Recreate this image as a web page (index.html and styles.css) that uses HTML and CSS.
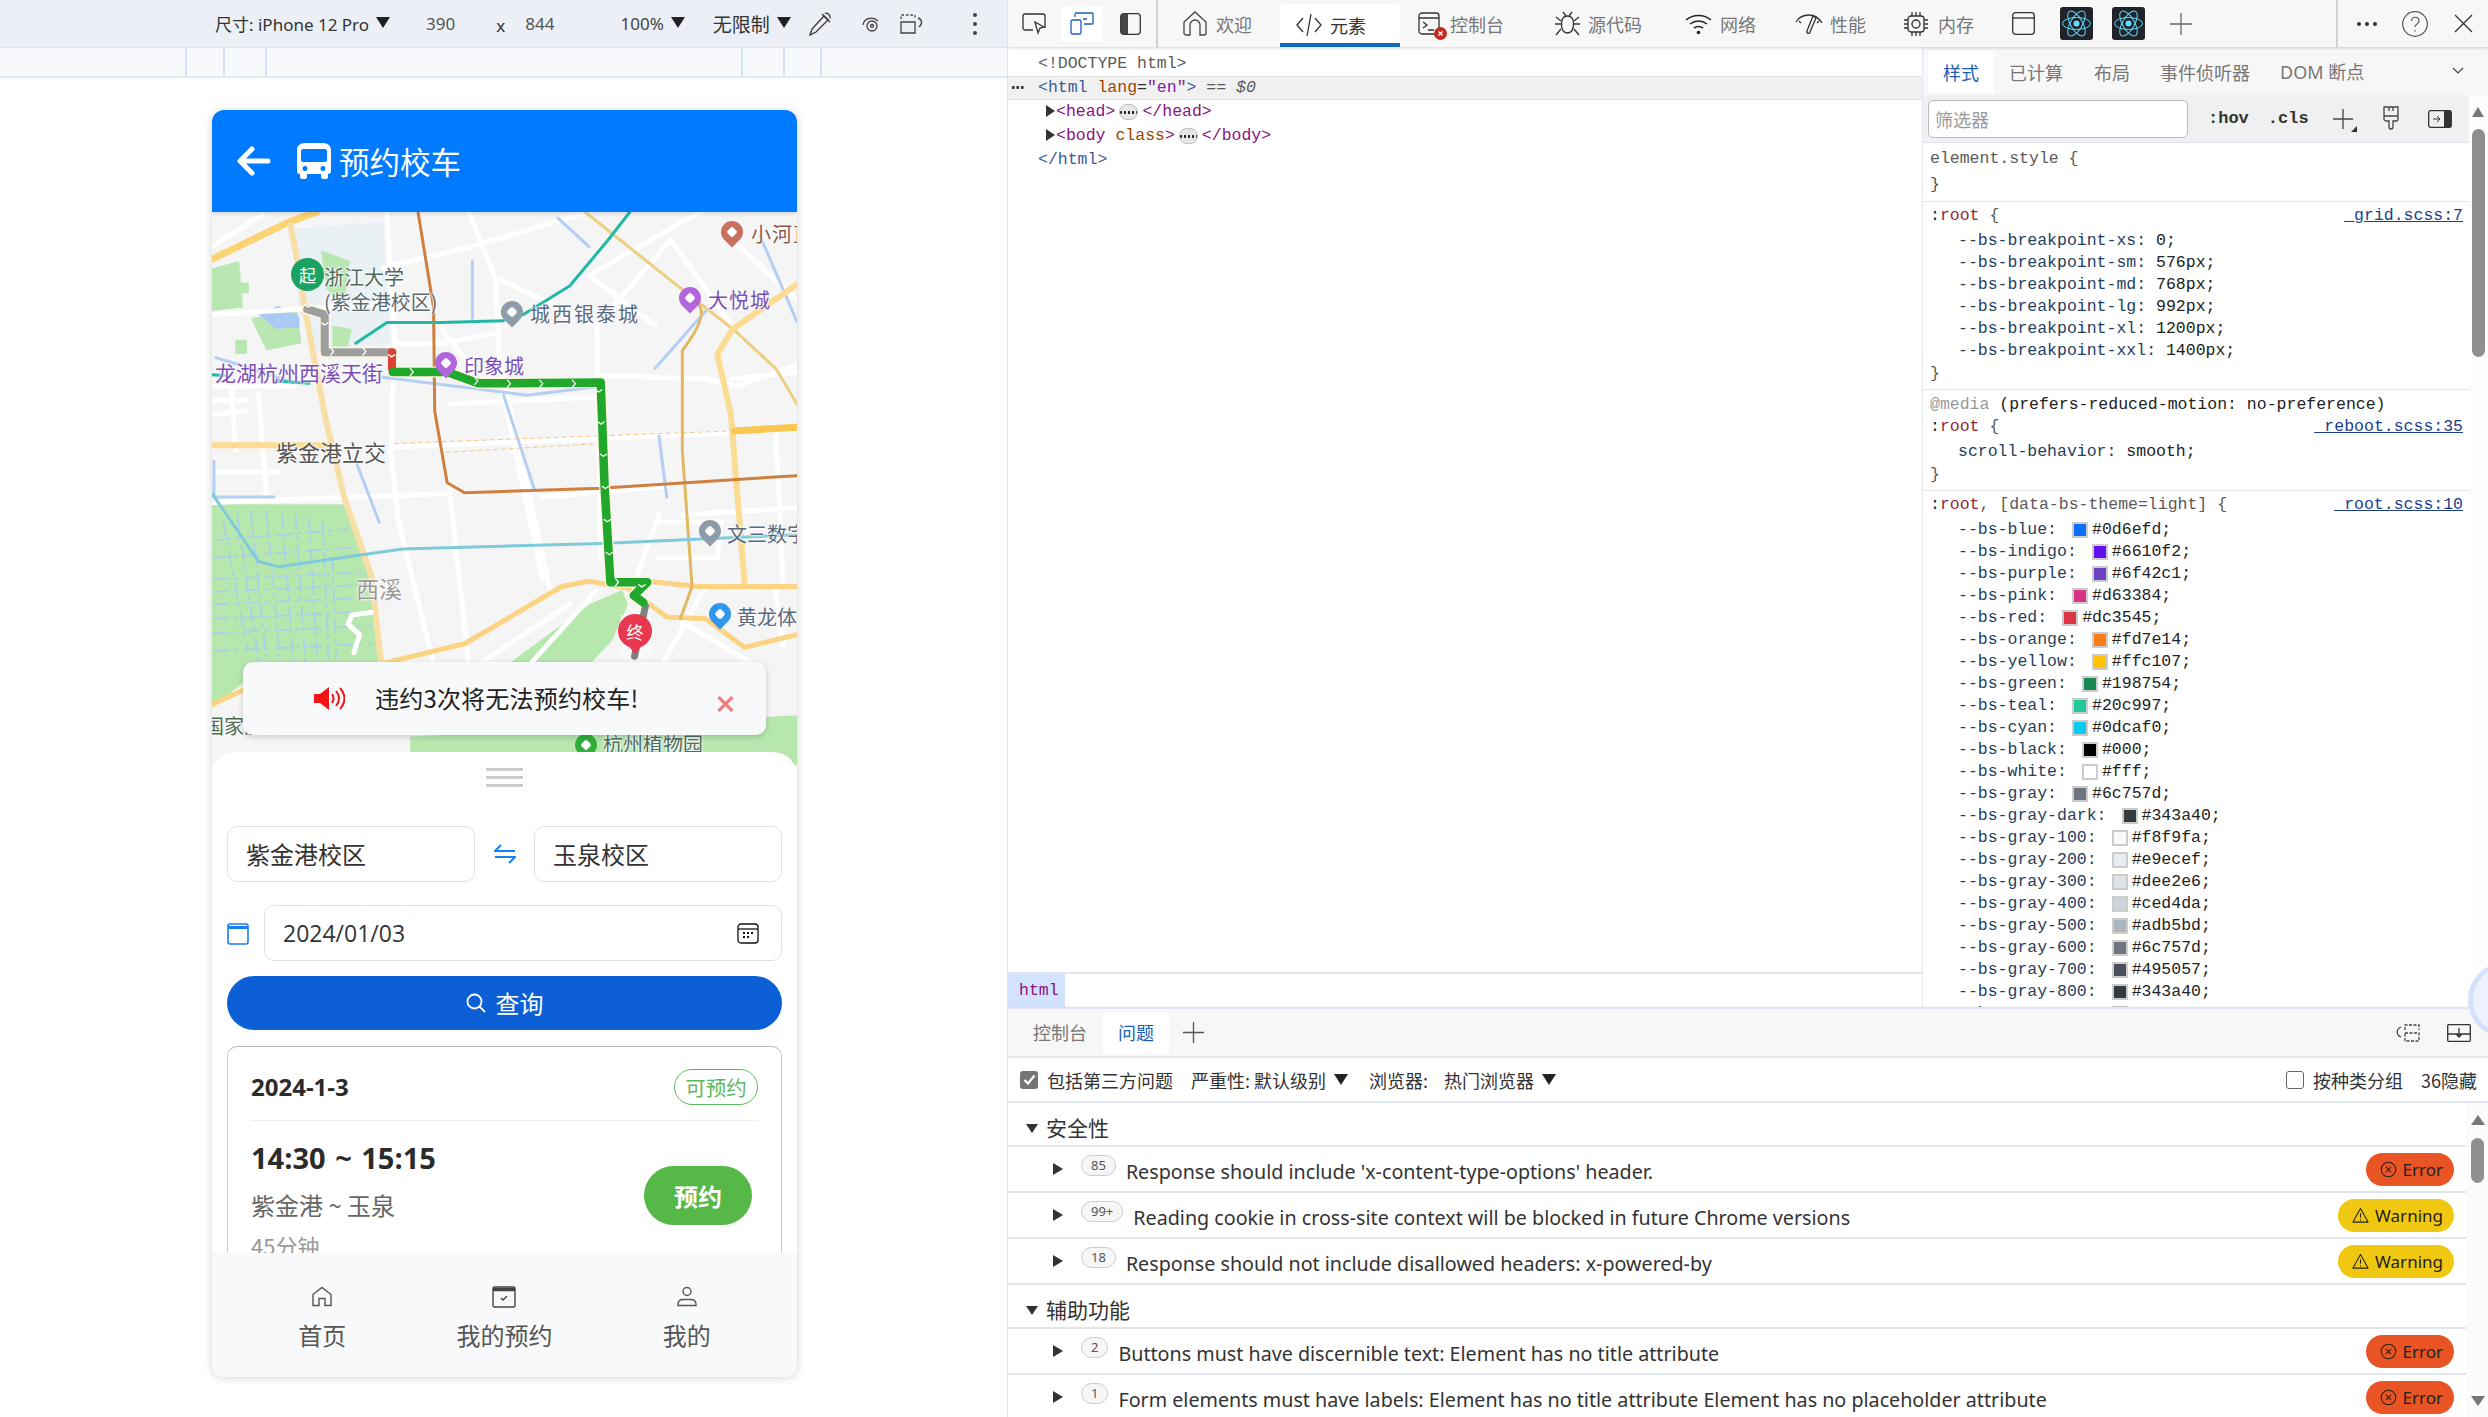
FILE: index.html
```html
<!DOCTYPE html>
<html lang="zh">
<head>
<meta charset="utf-8">
<title>预约校车</title>
<link rel="stylesheet" href="styles.css">
</head>
<body>
<svg class="defs" width="0" height="0">
  <symbol id="i-err" viewBox="0 0 18 18"><circle cx="9" cy="9" r="7.7" fill="none" stroke="#222" stroke-width="1.1"/><path d="M6.3 6.3l5.4 5.4M11.7 6.3l-5.4 5.4" stroke="#222" stroke-width="1.1" fill="none"/></symbol>
  <symbol id="i-warn" viewBox="0 0 18 18"><path d="M9 1.5l8 14.5H1z" fill="none" stroke="#222" stroke-width="1.1" stroke-linejoin="round"/><path d="M9 6.5v5M9 13v1.2" stroke="#222" stroke-width="1.1"/></symbol>
  <symbol id="i-react" viewBox="0 0 33 33"><rect width="33" height="33" rx="3" fill="#20232a"/><g fill="none" stroke="#61dafb" stroke-width="1"><ellipse cx="16.5" cy="16.5" rx="14" ry="6"/><ellipse cx="16.5" cy="16.5" rx="14" ry="6" transform="rotate(60 16.5 16.5)"/><ellipse cx="16.5" cy="16.5" rx="14" ry="6" transform="rotate(120 16.5 16.5)"/></g><circle cx="16.5" cy="16.5" r="3" fill="#61dafb"/></symbol>
</svg>

<div class="screen">
  <section class="emulator">
    <div class="device-bar">
      <span class="dv dv-size">尺寸: iPhone 12 Pro</span><span class="caret"></span>
      <span class="dv dv-w">390</span><span class="dv dv-x">x</span><span class="dv dv-h">844</span>
      <span class="dv dv-zoom">100%</span><span class="caret"></span>
      <span class="dv dv-net">无限制</span><span class="caret"></span>
      <svg class="dv-ic dv-ic1" width="26" height="26" viewBox="0 0 26 26" fill="none" stroke="#333" stroke-width="1.3"><path d="M3 24l2-6L17 5l4 4L9 21z"/><path d="M15 3l8 8M18 2.500c2-1.500 6 2 5 5"/></svg>
      <svg class="dv-ic dv-ic2" width="20" height="20" viewBox="0 0 20 20" fill="none" stroke="#444" stroke-width="1.3"><path d="M2 11c1-7 10-9 15-4"/><circle cx="11" cy="12" r="5"/><circle cx="11" cy="12" r="1.500"/></svg>
      <svg class="dv-ic dv-ic3" width="26" height="22" viewBox="0 0 26 22" fill="none" stroke="#444" stroke-width="1.3"><path d="M2 9h14v11H2z"/><path d="M2 6V2h14v4" stroke-dasharray="2.500 2"/><path d="M19 5c4 1 5 6 1 9"/></svg>
      <span class="dots-v"><i></i><i></i><i></i></span>
    </div>
    <div class="ruler"><i class="t1"></i><i class="t2"></i><i class="t3"></i><i class="t4"></i><i class="t5"></i><i class="t6"></i></div>

    <div class="phone">
      <header class="app-head">
        <svg class="back" width="34" height="30" viewBox="0 0 34 30" fill="none" stroke="#fff" stroke-width="5" stroke-linecap="round" stroke-linejoin="round"><path d="M15 3L3 15l12 12M4 15h27"/></svg>
        <svg class="bus" width="36" height="36" viewBox="0 0 36 36"><path fill="#fff" fill-rule="evenodd" d="M9 0h18c5 0 8 3 8 7v21c0 2-1 3-3 3v3c0 1-1 2-2 2h-3c-1 0-2-1-2-2v-3H11v3c0 1-1 2-2 2H6c-1 0-2-1-2-2v-3c-2 0-3-1-3-3V7c0-4 3-7 8-7zM7 6c-1 0-2 1-2 2v9c0 1 1 2 2 2h22c1 0 2-1 2-2V8c0-1-1-2-2-2zM9 23a2.500 2.500 0 100 5 2.500 2.500 0 000-5zm18 0a2.500 2.500 0 100 5 2.500 2.500 0 000-5z"/></svg>
        <h1 class="app-title">预约校车</h1>
      </header>

      <div class="map">
        <svg class="map-bg" viewBox="30 33 1505 1546" preserveAspectRatio="none">
          <rect x="30" y="33" width="1505" height="1546" fill="#f5f5f5"/>
          <path fill="#eaf1f5" d="M245 80L470 60 490 400 300 420 250 300z"/>
          <path fill="#b9e7b2" d="M30 190L100 170 110 300 30 310zM130 330L250 310 260 400 170 420zM310 140L385 170 370 290 325 250zM100 230h25v30h-25zM90 390h30v40H90zM340 350l50 10-10 50-40 0z"/>
          <path fill="#a9caf5" d="M150 320l50-25 55 30v30l-60 5z"/>
          <path fill="#b6e8ae" d="M30 850H370L440 1050 465 1300 250 1320 120 1340 30 1420zM800 1290L1000 1130 1085 1090 1100 1130 1060 1230 1000 1300H800zM540 1500L1535 1440V1579H540z"/>
          <path fill="#fff" d="M1080 1160l80 0v120h-80z" opacity=".4"/>
          <path class="r canal" d="M60 900L120 1250M95 880L150 1290M130 870L170 1290M170 870L205 1290M210 880L240 1290M245 880L270 1290M280 890L300 1280M315 900L330 1280M340 1000L350 1280M40 950L380 920M35 1000L400 970M35 1060L420 1040M35 1095L430 1075M35 1130L440 1110M35 1170L440 1150M35 1210L440 1190M35 1260L440 1240"/>
          <path class="r w5" d="M30 130L160 40M30 320L480 290M470 190L730 120 1000 33M480 33L500 400 490 700 510 900 600 1295M690 33L760 220 770 450 900 1090M30 845L640 820M640 800L690 1290M780 545L880 1060M1020 350L1030 1000M1000 210L1240 60 1290 33M1210 110L1360 340M1350 90L1535 280M1030 490L1300 500 1380 520 1535 460M500 690L1370 650M1180 900L1340 900 1330 1000 1180 1000M1480 640L1500 1080M1110 1090L1180 880M620 360L700 470M30 600L120 590M1190 1295L1300 1080M850 1295L1020 1090M1240 1180L1420 1295M80 520L90 700M150 540L170 830M35 760L200 760M30 520H240M720 1295L950 1130M1480 1090L1500 1250M500 400H620L770 370M770 220L1020 350 1210 110M30 560H120M880 830L1200 800M1365 500L1535 480M1240 880L1535 860M1000 210L1170 350M640 570L1020 550"/>
          <path class="r" stroke="#b4cff3" stroke-width="3" d="M470 495L840 545 1030 520M920 50L1000 130M700 170L700 330M780 545L860 810M1170 470L1300 310M1440 100L1535 340M40 440L100 460 240 510M1180 660L1200 830M35 730L35 830H190M400 730L460 900"/>
          <path class="r" stroke="#fbd372" stroke-width="7" d="M30 165L230 60 300 33"/>
          <path class="r" stroke="#f8dfa5" stroke-width="6" d="M232 70L250 170 270 310 320 600 370 830 440 1050 465 1295"/>
          <path class="r" stroke="#eccf83" stroke-width="3" d="M990 33L1240 250 1370 360 1480 470 1535 570"/>
          <path class="r" stroke="#fbdc92" stroke-width="6" d="M30 685H330M1535 235L1370 360 1330 430 1365 600 1400 1070"/>
          <path class="r" stroke="#f7c74e" stroke-width="7" d="M1375 645L1535 635"/>
          <path class="r" stroke="#f0c98c" stroke-width="1" stroke-dasharray="4 4" d="M500 680L1370 645M630 705L1030 680"/>
          <path class="r" stroke="#fbd382" stroke-width="5" d="M1150 1065L1280 1080 1535 1080M470 1295L680 1240 930 1080 1000 1065 1100 1085 1200 1165 1300 1170 1400 1250 1535 1215M30 1410L110 1370"/>
          <path class="r" stroke="#e0b860" stroke-width="3" d="M1280 290Q1310 320 1240 420V700L1265 1080 1235 1170"/>
          <path class="r" stroke="#cf7f3e" stroke-width="3" d="M560 33L600 300 603 590 635 790 680 818 1030 805 1535 770"/>
          <path class="r" stroke="#22b8a8" stroke-width="3" d="M1105 33L1050 110 950 240 830 320M400 400L480 342 620 342 780 337M30 488L60 490M190 505L280 512"/>
          <path class="r" stroke="#7fcbdc" stroke-width="3" d="M30 820L150 1010 200 1025 520 975 1030 960 1535 935"/>
          <path class="r w5" d="M390 1160L440 1152M390 1160L380 1185 410 1215 395 1265"/>
          <path class="r" stroke="#fdf6dc" stroke-width="11" d="M275 305L320 320V425H495V480H635L715 512 1030 510 1040 800 1055 1068H1150L1115 1105 1140 1125"/>
          <path class="r" stroke="#9e9e9e" stroke-width="8" d="M275 305L320 320V425H495"/>
          <path class="r" stroke="#808080" stroke-width="7" d="M1145 1135L1117 1275"/>
          <path class="r" stroke="#dc4334" stroke-width="8" d="M493 425V470"/>
          <path class="r" stroke="#1fa82b" stroke-width="8.500" d="M495 480H635L715 512 1030 510 1040 800 1055 1068H1150L1115 1105 1140 1125"/>
          <path class="r" stroke="#fff" stroke-width="1.300" d="M335 413l8 10-8 10M418 413l8 10-8 10M540 470l8 10-8 10M625 472l8 10-8 10M706 495l8 10-8 10M790 503l8 10-8 10M873 503l8 10-8 10M957 503l8 10-8 10M1068 1058l8 10-8 10M270 293l8 6 8-6M312 343l8 6 8-6M484 432l8 6 8-6M1017 530l8 6 8-6M1023 620l8 6 8-6M1029 710l8 6 8-6M1034 800l8 6 8-6M1039 893l8 6 8-6M1044 985l8 6 8-6M1128 1075l8 6 8-6"/>
        </svg>

        <span class="lbl l-zju1">浙江大学</span>
        <span class="lbl l-zju2">(紫金港校区)</span>
        <span class="lbl l-yintai">城西银泰城</span>
        <span class="lbl l-joy">大悦城</span>
        <span class="lbl l-river">小河直街</span>
        <span class="lbl l-mix">印象城</span>
        <span class="lbl l-longhu">龙湖杭州西溪天街</span>
        <span class="lbl l-zjg">紫金港立交</span>
        <span class="lbl l-xixi">西溪</span>
        <span class="lbl l-wensan">文三数字</span>
        <span class="lbl l-huanglong">黄龙体育</span>
        <span class="lbl l-wet">国家湿地</span>
        <span class="lbl l-plant">杭州植物园</span>

        <span class="poi poi-river"></span>
        <span class="poi poi-joy"></span>
        <span class="poi poi-yintai"></span>
        <span class="poi poi-mix"></span>
        <span class="poi poi-wensan"></span>
        <span class="poi poi-huanglong"></span>
        <span class="poi poi-plant"></span>
        <span class="pin pin-start">起</span>
        <span class="pin pin-end">终</span>

        <div class="alert">
          <svg class="speaker" width="31" height="23" viewBox="0 0 31 23"><path fill="#f01414" d="M0 7h6l9-7v23l-9-7H0z"/><path fill="none" stroke="#f01414" stroke-width="2" d="M18 7c2 3 2 6 0 9M22 4c4 5 4 10 0 15M26 1c6 7 6 14 0 21"/></svg>
          <span class="alert-text">违约3次将无法预约校车!</span>
          <svg class="alert-x" width="17" height="16" viewBox="0 0 17 16"><path stroke="#f47c7c" stroke-width="3.200" d="M1.500 1l14 14M15.500 1l-14 14"/></svg>
        </div>
      </div>

      <div class="sheet">
        <div class="handle"><i></i><i></i><i></i></div>
        <div class="campus-row">
          <div class="field">紫金港校区</div>
          <svg class="swap" width="22" height="20" viewBox="0 0 22 20" fill="none" stroke="#1a7ff0" stroke-width="2"><path d="M21 7H1l6-6M1 13h20l-6 6"/></svg>
          <div class="field">玉泉校区</div>
        </div>
        <div class="date-row">
          <svg width="22" height="23" viewBox="0 0 22 23" fill="none" stroke="#1a7ff0" stroke-width="1.600"><rect x="1" y="2" width="20" height="20" rx="2"/><path d="M1 5.500h20" stroke-width="3"/></svg>
          <div class="field date-field"><span>2024/01/03</span>
            <svg width="22" height="21" viewBox="0 0 22 21" fill="none" stroke="#111" stroke-width="1.300"><rect x="1" y="1" width="20" height="19" rx="3"/><path d="M1 6h20"/><path stroke-width="2" stroke-dasharray="2 2" d="M6 10h10M6 14h6"/></svg>
          </div>
        </div>
        <button class="query">
          <svg width="20" height="20" viewBox="0 0 20 20" fill="none" stroke="#fff" stroke-width="1.800"><circle cx="8.500" cy="8.500" r="7"/><path d="M13.500 13.500l5.500 5.500"/></svg>
          <span>查询</span>
        </button>
        <article class="card">
          <div class="card-head"><span class="card-date">2024-1-3</span><span class="avail">可预约</span></div>
          <div class="card-body">
            <div class="trip">
              <div class="trip-time">14:30 ~ 15:15</div>
              <div class="trip-route">紫金港 ~ 玉泉</div>
              <div class="trip-dur">45分钟</div>
            </div>
            <button class="book">预约</button>
          </div>
        </article>
      </div>

      <nav class="tabbar">
        <a class="tab-item">
          <svg width="22" height="22" viewBox="0 0 22 22" fill="none" stroke="#555" stroke-width="1.400"><path d="M2 20V9l9-7 9 7v11h-6v-7H8v7z"/></svg>
          <span>首页</span>
        </a>
        <a class="tab-item">
          <svg width="24" height="23" viewBox="0 0 24 23" fill="none" stroke="#444" stroke-width="1.400"><rect x="1" y="2" width="22" height="20" rx="1.500"/><path d="M1 4.500h22" stroke-width="3.500"/><path d="M9 13l2 2 4-4"/></svg>
          <span>我的预约</span>
        </a>
        <a class="tab-item">
          <svg width="20" height="22" viewBox="0 0 20 22" fill="none" stroke="#555" stroke-width="1.400"><circle cx="10" cy="6" r="4"/><path d="M1 19c0-3 2-5 5-5h8c3 0 5 2 5 5v1H1z"/></svg>
          <span>我的</span>
        </a>
      </nav>
    </div>
  </section>

  <section class="devtools">
    <div class="dt-bar">
      <svg class="ti-inspect" width="24" height="22" viewBox="0 0 24 22" fill="none" stroke="#333" stroke-width="1.300"><path d="M11 17H3a2 2 0 01-2-2V3a2 2 0 012-2h18a2 2 0 012 2v12"/><path d="M13 9l9 5-4 1-2 5z"/></svg>
      <span class="device-on"><svg width="24" height="23" viewBox="0 0 24 23" fill="none" stroke="#1a5fb4" stroke-width="1.300"><rect x="1" y="8" width="10" height="14" rx="1.500"/><path d="M5 1h17a1 1 0 011 1v9a1 1 0 01-1 1H14M5 5V2M13 7h4"/></svg></span>
      <svg class="ti-side" width="21" height="22" viewBox="0 0 21 22"><rect x=".7" y=".7" width="19.600" height="20.600" rx="3" fill="none" stroke="#333" stroke-width="1.300"/><path d="M1 4a3 3 0 013-3h4v20H4a3 3 0 01-3-3z" fill="#444"/></svg>
      <i class="dt-div d1"></i>
      <span class="dtab t-welcome"><svg width="24" height="25" viewBox="0 0 24 25" fill="none" stroke="#444" stroke-width="1.300"><path d="M7 24H3a2 2 0 01-2-2V11L12 1l11 10v11a2 2 0 01-2 2h-4V14a5 5 0 00-10 0z"/></svg>欢迎</span>
      <span class="dtab dtab-on t-elements"><svg width="26" height="24" viewBox="0 0 26 24" fill="none" stroke="#333" stroke-width="1.300"><path d="M7 5l-6 7 6 7M19 5l6 7-6 7M15 1l-4 22"/></svg>元素</span>
      <span class="dtab t-console"><span class="cons-ic"><svg width="22" height="23" viewBox="0 0 22 23" fill="none" stroke="#333" stroke-width="1.300"><rect x="1" y="1" width="20" height="21" rx="3"/><path d="M1 6h20M5 10l4 3-4 3M10 18h6"/></svg><i class="cons-badge"><svg width="13" height="13" viewBox="0 0 13 13" stroke="#fff" stroke-width="1.300"><path d="M4.500 4.500l4 4M8.500 4.500l-4 4"/></svg></i></span>控制台</span>
      <span class="dtab t-sources"><svg width="25" height="25" viewBox="0 0 25 25" fill="none" stroke="#333" stroke-width="1.300"><path d="M12.500 5c4 0 6 3 6 8s-2 9-6 9-6-4-6-9 2-8 6-8z"/><path d="M8 1l3 4M17 1l-3 4M1 6l5 4M24 6l-5 4M0 13h6M25 13h-6M1 24l5-6M24 24l-5-6"/></svg>源代码</span>
      <span class="dtab t-network"><svg width="27" height="22" viewBox="0 0 27 22" fill="none" stroke="#222" stroke-width="1.600"><path d="M1 7c7-6 18-6 25 0M5 11c5-4 12-4 17 0M9 15c3-2 6-2 9 0"/><circle cx="13.500" cy="19.500" r="1.800" fill="#222" stroke="none"/></svg>网络</span>
      <span class="dtab t-perf"><svg width="28" height="22" viewBox="0 0 28 22" fill="none" stroke="#333" stroke-width="1.300"><path d="M1 9c3-5 7-7 13-7 5 0 10 3 13 8M4 8l2 2M24 8l-2 2"/><path d="M18 3l-6 15c-1 3 3 3 3 1l6-14z"/></svg>性能</span>
      <span class="dtab t-memory"><svg width="24" height="24" viewBox="0 0 24 24" fill="none" stroke="#333" stroke-width="1.300"><rect x="4" y="4" width="16" height="16" rx="3"/><circle cx="12" cy="12" r="4"/><path d="M8 0v4M12 0v4M16 0v4M8 20v4M12 20v4M16 20v4M0 8h4M0 12h4M0 16h4M20 8h4M20 12h4M20 16h4"/></svg>内存</span>
      <svg class="ti-window" width="23" height="23" viewBox="0 0 23 23" fill="none" stroke="#333" stroke-width="1.300"><rect x=".7" y=".7" width="21.600" height="21.600" rx="3"/><path d="M1 6h21"/></svg>
      <svg class="ti-react1" width="33" height="33"><use href="#i-react"/></svg>
      <svg class="ti-react2" width="33" height="33"><use href="#i-react"/></svg>
      <svg class="ti-plus" width="22" height="22" viewBox="0 0 22 22" stroke="#666" stroke-width="1.300"><path d="M0 11h22M11 0v22"/></svg>
      <i class="dt-div d2"></i>
      <span class="h-dots"><i></i><i></i><i></i></span>
      <svg class="ti-help" width="26" height="26" viewBox="0 0 26 26" fill="none" stroke="#555" stroke-width="1.200"><circle cx="13" cy="13" r="12.300"/><path d="M9.500 10c0-5 7.500-5 7.500 0 0 3-4 3-4 6M13 19v1.500"/></svg>
      <svg class="ti-close" width="19" height="19" viewBox="0 0 19 19" stroke="#333" stroke-width="1.300"><path d="M1 1l17 17M18 1L1 18"/></svg>
    </div>

    <div class="dt-main">
      <div class="dom-panel">
        <div class="dom-tree mono">
          <div class="dom-row c-gray">&lt;!DOCTYPE html&gt;</div>
          <div class="dom-row dom-sel"><span class="sel-dots"></span><span class="c-blue">&lt;html</span> <span class="c-attr">lang</span>=<span class="c-val">"en"</span><span class="c-blue">&gt;</span> <span class="c-gray">== <em>$0</em></span></div>
          <div class="dom-row dom-in"><span class="tri-r"></span><span class="c-tag">&lt;head&gt;</span><span class="ell"></span><span class="c-tag">&lt;/head&gt;</span></div>
          <div class="dom-row dom-in"><span class="tri-r"></span><span class="c-tag">&lt;body</span> <span class="c-attr">class</span><span class="c-tag">&gt;</span><span class="ell"></span><span class="c-tag">&lt;/body&gt;</span></div>
          <div class="dom-row c-blue">&lt;/html&gt;</div>
        </div>
        <div class="crumbs"><span class="crumb mono">html</span></div>
      </div>

      <aside class="styles">
        <div class="st-tabs">
          <span class="st-tab st-on">样式</span><span class="st-tab">已计算</span><span class="st-tab">布局</span><span class="st-tab">事件侦听器</span><span class="st-tab">DOM 断点</span>
          <svg class="st-more" width="12" height="8" viewBox="0 0 12 8" fill="none" stroke="#444" stroke-width="1.200"><path d="M1 1l5 5 5-5"/></svg>
        </div>
        <div class="st-filter">
          <div class="filter-in">筛选器</div>
          <span class="hov mono">:hov</span><span class="cls mono">.cls</span>
          <svg class="f-plus" width="24" height="24" viewBox="0 0 24 24"><path d="M0 11h20M10 1v20" stroke="#444" stroke-width="1.300"/><path d="M24 18v6h-6z" fill="#333"/></svg>
          <svg class="f-brush" width="16" height="25" viewBox="0 0 16 25" fill="none" stroke="#444" stroke-width="1.300"><path d="M1 1h14v12a2 2 0 01-2 2h-3v6a2 2 0 01-4 0v-6H3a2 2 0 01-2-2zM1 10h14M6 1v4M10 1v4"/></svg>
          <svg class="f-side" width="24" height="18" viewBox="0 0 24 18"><rect x=".7" y=".7" width="22.600" height="16.600" rx="2" fill="none" stroke="#333" stroke-width="1.300"/><path d="M16 1h6a1 1 0 011 1v14a1 1 0 01-1 1h-6z" fill="#333"/><path d="M5 9h7M9 6l3 3-3 3" fill="none" stroke="#333"/></svg>
        </div>
        <div class="st-rules mono">
          <div class="rule r-a">
            <div class="ln ln-sel c-gray">element.style {</div>
            <div class="ln ln-c c-gray">}</div>
          </div>
          <div class="rule">
            <div class="ln ln-sel"><span><span class="c-colon">:</span><span class="c-root">root</span> <span class="c-gray">{</span></span><a class="src">_grid.scss:7</a></div>
            <div class="ln p">--bs-breakpoint-xs: <b>0;</b></div>
            <div class="ln p">--bs-breakpoint-sm: <b>576px;</b></div>
            <div class="ln p">--bs-breakpoint-md: <b>768px;</b></div>
            <div class="ln p">--bs-breakpoint-lg: <b>992px;</b></div>
            <div class="ln p">--bs-breakpoint-xl: <b>1200px;</b></div>
            <div class="ln p">--bs-breakpoint-xxl: <b>1400px;</b></div>
            <div class="ln ln-e c-gray">}</div>
          </div>
          <div class="rule r-m">
            <div class="ln"><span class="c-lgray">@media</span>&nbsp;<b>(prefers-reduced-motion: no-preference)</b></div>
            <div class="ln ln-sel"><span><span class="c-colon">:</span><span class="c-root">root</span> <span class="c-gray">{</span></span><a class="src">_reboot.scss:35</a></div>
            <div class="ln p">scroll-behavior: <b>smooth;</b></div>
            <div class="ln ln-e c-gray">}</div>
          </div>
          <div class="rule">
            <div class="ln ln-sel"><span><span class="c-colon">:</span><span class="c-root">root</span><span class="c-gray">, [data-bs-theme=light] {</span></span><a class="src">_root.scss:10</a></div>
            <div class="ln p">--bs-blue:<i class="sw s-blue"></i><b>#0d6efd;</b></div>
            <div class="ln p">--bs-indigo:<i class="sw s-indigo"></i><b>#6610f2;</b></div>
            <div class="ln p">--bs-purple:<i class="sw s-purple"></i><b>#6f42c1;</b></div>
            <div class="ln p">--bs-pink:<i class="sw s-pink"></i><b>#d63384;</b></div>
            <div class="ln p">--bs-red:<i class="sw s-red"></i><b>#dc3545;</b></div>
            <div class="ln p">--bs-orange:<i class="sw s-orange"></i><b>#fd7e14;</b></div>
            <div class="ln p">--bs-yellow:<i class="sw s-yellow"></i><b>#ffc107;</b></div>
            <div class="ln p">--bs-green:<i class="sw s-green"></i><b>#198754;</b></div>
            <div class="ln p">--bs-teal:<i class="sw s-teal"></i><b>#20c997;</b></div>
            <div class="ln p">--bs-cyan:<i class="sw s-cyan"></i><b>#0dcaf0;</b></div>
            <div class="ln p">--bs-black:<i class="sw s-black"></i><b>#000;</b></div>
            <div class="ln p">--bs-white:<i class="sw s-white"></i><b>#fff;</b></div>
            <div class="ln p">--bs-gray:<i class="sw s-g600"></i><b>#6c757d;</b></div>
            <div class="ln p">--bs-gray-dark:<i class="sw s-g800"></i><b>#343a40;</b></div>
            <div class="ln p">--bs-gray-100:<i class="sw s-g100"></i><b>#f8f9fa;</b></div>
            <div class="ln p">--bs-gray-200:<i class="sw s-g200"></i><b>#e9ecef;</b></div>
            <div class="ln p">--bs-gray-300:<i class="sw s-g300"></i><b>#dee2e6;</b></div>
            <div class="ln p">--bs-gray-400:<i class="sw s-g400"></i><b>#ced4da;</b></div>
            <div class="ln p">--bs-gray-500:<i class="sw s-g500"></i><b>#adb5bd;</b></div>
            <div class="ln p">--bs-gray-600:<i class="sw s-g600"></i><b>#6c757d;</b></div>
            <div class="ln p">--bs-gray-700:<i class="sw s-g700"></i><b>#495057;</b></div>
            <div class="ln p">--bs-gray-800:<i class="sw s-g800"></i><b>#343a40;</b></div>
            <div class="ln p">--bs-gray-900:<i class="sw s-g900"></i><b>#212529;</b></div>
          </div>
        </div>
        <div class="vbar vbar-st"><i class="up"></i><i class="thumb"></i></div>
      </aside>
    </div>

    <div class="drawer-tabs">
      <span class="dr-tab">控制台</span><span class="dr-tab dr-on">问题</span>
      <svg class="dr-plus" width="21" height="21" viewBox="0 0 21 21" stroke="#555" stroke-width="1.300"><path d="M0 10.500h21M10.500 0v21"/></svg>
      <svg class="dr-ic1" width="24" height="18" viewBox="0 0 24 18" fill="none" stroke="#444" stroke-width="1.300"><path d="M9 9h14v8H9zM9 6V1h14v5" stroke-dasharray="3 1.500"/><path d="M5 3C0 5 0 11 5 13"/></svg>
      <svg class="dr-ic2" width="24" height="18" viewBox="0 0 24 18" fill="none" stroke="#333" stroke-width="1.300"><rect x=".7" y=".7" width="22.600" height="16.600" rx="1"/><path d="M1 10h22M12 4v9M9 10l3 3 3-3"/></svg>
    </div>
    <div class="issues-bar">
      <label class="chk-on"><svg width="13" height="11" viewBox="0 0 13 11" fill="none" stroke="#fff" stroke-width="2.200"><path d="M1.500 6l3.500 3.500 6.500-8"/></svg></label>
      <span class="ib ib1">包括第三方问题</span>
      <span class="ib ib2">严重性: 默认级别</span><span class="caret"></span>
      <span class="ib ib3">浏览器:</span><span class="ib ib4">热门浏览器</span><span class="caret"></span>
      <label class="chk-off"></label>
      <span class="ib ib5">按种类分组</span>
      <span class="ib ib6">36隐藏</span>
    </div>
    <div class="issues">
      <div class="issue-list">
        <div class="group"><span class="tri-d"></span>安全性</div>
        <div class="issue"><span class="tri-r2"></span><span class="count">85</span><span class="msg">Response should include 'x-content-type-options' header.</span><span class="sev sev-e"><svg width="17" height="17"><use href="#i-err"/></svg>Error</span></div>
        <div class="issue"><span class="tri-r2"></span><span class="count">99+</span><span class="msg">Reading cookie in cross-site context will be blocked in future Chrome versions</span><span class="sev sev-w"><svg width="17" height="17"><use href="#i-warn"/></svg>Warning</span></div>
        <div class="issue"><span class="tri-r2"></span><span class="count">18</span><span class="msg">Response should not include disallowed headers: x-powered-by</span><span class="sev sev-w"><svg width="17" height="17"><use href="#i-warn"/></svg>Warning</span></div>
        <div class="group"><span class="tri-d"></span>辅助功能</div>
        <div class="issue"><span class="tri-r2"></span><span class="count">2</span><span class="msg">Buttons must have discernible text: Element has no title attribute</span><span class="sev sev-e"><svg width="17" height="17"><use href="#i-err"/></svg>Error</span></div>
        <div class="issue"><span class="tri-r2"></span><span class="count">1</span><span class="msg">Form elements must have labels: Element has no title attribute Element has no placeholder attribute</span><span class="sev sev-e"><svg width="17" height="17"><use href="#i-err"/></svg>Error</span></div>
      </div>
      <div class="vbar vbar-is"><i class="up"></i><i class="thumb"></i><i class="down"></i></div>
    </div>
    <i class="float-ball"></i>
  </section>
</div>
</body>
</html>
```

FILE: styles.css
```css
* { box-sizing: border-box; }
html, body { margin: 0; padding: 0; background: #fff; }
body { font-family: "Noto Sans", "Noto Sans CJK SC", sans-serif; color: #222; }
.defs { position: absolute; }
i { font-style: normal; }
.mono { font-family: "Liberation Mono", "DejaVu Sans Mono", monospace; font-size: 16.5px; }
.screen { width: 2488px; height: 1417px; display: flex; overflow: hidden; }

/* ---------- emulator ---------- */
.emulator { width: 1008px; flex: none; border-right: 1px solid #dbe4f2; display: flex; flex-direction: column; }
.device-bar { height: 48px; background: #eceff5; border-bottom: 1px solid #d9e3f5; display: flex; align-items: center; font-size: 17px; color: #333; padding-left: 215px; }
.dv { white-space: nowrap; font-family: "Noto Sans", "Noto Sans CJK SC", sans-serif; }
.dv-w { margin-left: 36px; color: #555; }
.dv-x { margin-left: 41px; margin-top: 4px; }
.dv-h { margin-left: 20px; color: #555; }
.dv-zoom { margin-left: 66px; color: #444; }
.dv-net { margin-left: 28px; font-size: 19px; }
.caret { width: 0; height: 0; border-left: 7px solid transparent; border-right: 7px solid transparent; border-top: 11px solid #222; margin-left: 7px; margin-top: -3px; flex: none; }
.dv-ic1 { margin-left: 16px; }
.dv-ic2 { margin-left: 28px; }
.dv-ic3 { margin-left: 18px; }
.dots-v { display: flex; flex-direction: column; gap: 5px; margin-left: 48px; }
.dots-v i { width: 4px; height: 4px; border-radius: 50%; background: #444; }
.ruler { height: 30px; background: #f8f9fc; border-bottom: 2px solid #dfe8f6; position: relative; }
.ruler i { position: absolute; top: 0; bottom: 0; width: 2px; background: #d6e2fa; }
.t1 { left: 185px; } .t2 { left: 223px; } .t3 { left: 265px; } .t4 { left: 741px; } .t5 { left: 783px; } .t6 { left: 820px; }

.phone { width: 585px; height: 1267px; margin: 32px 0 0 212px; border-radius: 12px; background: #fff; box-shadow: 0 1px 8px rgba(0,0,0,.18); display: flex; flex-direction: column; overflow: hidden; }
.app-head { height: 102px; flex: none; background: #007bff; display: flex; align-items: center; padding: 0 0 0 25px; position: relative; z-index: 2; box-shadow: 0 2px 4px rgba(0,0,0,.12); }
.back { flex: none; }
.bus { margin-left: 25px; flex: none; }
.app-title { margin: 0 0 0 7px; font: 400 30.5px/1 "Noto Sans CJK SC", sans-serif; color: #fff; }

.map { height: 553px; flex: none; position: relative; overflow: hidden; background: #f5f5f5; font-family: "Noto Sans CJK SC", sans-serif; }
.map-bg { position: absolute; inset: 0; width: 100%; height: 100%; display: block; }
.r { fill: none; stroke-linecap: round; stroke-linejoin: round; vector-effect: non-scaling-stroke; }
.w5 { stroke: #fff; stroke-width: 5; }
.canal { stroke: #a9c8f6; stroke-width: 2; stroke-dasharray: 14 6 3 8; opacity: .75; }

.lbl { position: absolute; white-space: nowrap; line-height: 1; font-size: 20px; color: #5b5b66; text-shadow: 0 0 2px #fff, 0 0 2px #fff, 0 0 3px #fff; }
.l-zju1 { left: 112px; top: 55px; color: #4f6a60; }
.l-zju2 { left: 112px; top: 80px; color: #5a6a70; }
.l-yintai { left: 318px; top: 92px; letter-spacing: 2px; color: #5a6a80; }
.l-joy { left: 496px; top: 78px; color: #7a4fb5; letter-spacing: 1px; }
.l-river { left: 539px; top: 12px; color: #8a5a50; letter-spacing: 1px; }
.l-mix { left: 252px; top: 144px; color: #7a4fb5; }
.l-longhu { left: 3px; top: 150px; color: #7a4fb5; font-size: 21px; }
.l-zjg { left: 64px; top: 228px; color: #555; font-size: 22px; }
.l-xixi { left: 144px; top: 365px; color: #999; font-size: 23px; }
.l-wensan { left: 515px; top: 312px; color: #5a6a80; }
.l-huanglong { left: 525px; top: 395px; color: #5a6a80; }
.l-wet { left: -8px; top: 504px; color: #4f6a50; }
.l-plant { left: 391px; top: 522px; color: #4f6a60; }

.poi { position: absolute; width: 22px; height: 22px; border-radius: 50% 50% 0 50%; transform: rotate(45deg); }
.poi::after { content: ""; position: absolute; left: 7px; top: 7px; width: 8px; height: 8px; background: #fff; border-radius: 2px; }
.poi-river { left: 509px; top: 9px; background: #c9705f; }
.poi-joy { left: 467px; top: 75px; background: #b266dd; }
.poi-yintai { left: 289px; top: 89px; background: #8d9cab; }
.poi-mix { left: 223px; top: 140px; background: #b266dd; }
.poi-wensan { left: 487px; top: 308px; background: #8d9cab; }
.poi-huanglong { left: 497px; top: 391px; background: #2f97ee; }
.poi-plant { left: 363px; top: 522px; background: #2fae3a; }

.pin { position: absolute; border-radius: 50%; color: #fff; display: flex; align-items: center; justify-content: center; font-size: 17px; line-height: 1; }
.pin::after { content: ""; position: absolute; left: 50%; width: 0; height: 0; transform: translateX(-50%); }
.pin-start { left: 79px; top: 46px; width: 33px; height: 33px; background: #1aa264; }
.pin-start::after { top: 27px; border-left: 11px solid transparent; border-right: 11px solid transparent; border-top: 16px solid #3f90d6; z-index: -1; }
.pin-end { left: 406px; top: 402px; width: 34px; height: 34px; background: #e8384f; }
.pin-end::after { top: 30px; border-left: 8px solid transparent; border-right: 8px solid transparent; border-top: 10px solid #e8384f; }

.alert { position: absolute; left: 31px; top: 450px; width: 523px; height: 73px; background: #f8f9fa; border-radius: 10px; box-shadow: 0 2px 6px rgba(0,0,0,.18); display: flex; align-items: center; padding-left: 71px; }
.alert-text { margin-left: 30px; font-size: 24px; line-height: 1; color: #222; white-space: nowrap; margin-top: -1px; letter-spacing: .2px; }
.alert-x { margin-left: 79px; margin-top: 10px; }

.sheet { flex: 1; min-height: 0; margin-top: -13px; position: relative; z-index: 1; background: #fff; border-radius: 24px 24px 0 0; overflow: hidden; padding: 16px 15px 0; font-family: "Noto Sans CJK SC", sans-serif; }
.handle { width: 37px; height: 19px; margin: 0 auto; display: flex; flex-direction: column; justify-content: space-between; }
.handle i { height: 3px; background: #ccc; }
.campus-row { margin-top: 39px; display: grid; grid-template-columns: 248px 1fr 248px; align-items: center; justify-items: center; }
.field { height: 56px; width: 100%; border: 1px solid #dee2e6; border-radius: 10px; font-size: 24px; line-height: 54px; padding-left: 18px; color: #333; }
.date-row { margin-top: 23px; display: flex; align-items: center; gap: 15px; }
.date-field { flex: 1; display: flex; align-items: center; justify-content: space-between; padding: 0 22px 0 18px; font-family: "Open Sans", "Noto Sans", sans-serif; font-size: 23px; }
.query { margin-top: 15px; width: 100%; height: 54px; border: 0; border-radius: 27px; background: #0d5fd6; color: #fff; font: 400 24px/1 "Noto Sans CJK SC", sans-serif; display: flex; align-items: center; justify-content: center; gap: 10px; }
.card { margin-top: 16px; border: 1px solid #ccc; border-top-color: #bbb; border-radius: 10px; padding: 22px 23px 0; height: 260px; }
.card-head { display: flex; justify-content: space-between; align-items: center; padding-bottom: 15px; border-bottom: 1px solid #eee; }
.card-date { font: 700 24px/1 "Open Sans", "Noto Sans", sans-serif; color: #2b2b2b; }
.avail { height: 36px; width: 84px; border: 1px solid #5cb85c; border-radius: 18px; color: #5cb85c; font-size: 20.5px; line-height: 34px; text-align: center; }
.card-body { display: flex; align-items: center; justify-content: space-between; margin-top: 17px; padding-right: 6px; }
.trip-time { font: 700 29px/40px "Open Sans", "Noto Sans", sans-serif; color: #2b2b2b; word-spacing: 2px; }
.trip-route { margin-top: 13px; font-size: 24px; line-height: 28px; color: #666; }
.trip-dur { margin-top: 14px; font-size: 22px; line-height: 24px; color: #999; }
.book { width: 108px; height: 59px; margin-top: -4px; border: 0; border-radius: 30px; background: #56b947; color: #fff; font: 700 24px/1 "Noto Sans CJK SC", sans-serif; }
.tabbar { height: 124px; flex: none; background: #f8f9fa; display: grid; grid-template-columns: repeat(3, 1fr); padding: 0 19px; position: relative; z-index: 2; font-family: "Noto Sans CJK SC", sans-serif; }
.tab-item { display: flex; flex-direction: column; align-items: center; padding-top: 32px; color: #555; font-size: 24px; line-height: 1; }
.tab-item svg { height: 23px; }
.tab-item span { margin-top: 15px; }

/* ---------- devtools ---------- */
.devtools { flex: 1; min-width: 0; display: flex; flex-direction: column; position: relative; overflow: hidden; font-family: "Noto Sans CJK SC", sans-serif; }
.dt-bar { height: 47px; flex: none; background: #f7f7f7; box-shadow: 0 1px 3px rgba(0,0,0,.18); display: flex; align-items: center; position: relative; z-index: 3; padding-left: 14px; }
.ti-inspect, .ti-side, .ti-window, .ti-react1, .ti-react2, .ti-plus, .ti-help, .ti-close { flex: none; }
.device-on { width: 42px; height: 36px; margin-left: 15px; background: #fff; border-radius: 4px; display: flex; align-items: center; justify-content: center; }
.ti-side { margin-left: 17px; }
.dt-div { width: 2px; height: 47px; background: #d2d2d2; flex: none; }
.d1 { margin-left: 15px; }
.d2 { margin-left: 144px; }
.dtab { display: flex; align-items: center; gap: 9px; font-size: 18px; color: #777; height: 47px; white-space: nowrap; flex: none; }
.t-welcome { margin-left: 25px; }
.t-elements { margin-left: 28px; }
.t-console { margin-left: 18px; }
.t-sources { margin-left: 51px; gap: 8px; }
.t-network { margin-left: 43px; gap: 8px; }
.t-perf { margin-left: 39px; gap: 7px; }
.t-memory { margin-left: 38px; gap: 10px; }
.dtab-on { width: 120px; height: 43px; margin-top: 3px; background: #fff; border-radius: 4px 4px 0 0; border-bottom: 4px solid #0f6cbd; color: #333; padding: 0 16px; gap: 8px; padding-top: 4px; }
.cons-ic { position: relative; display: block; width: 22px; height: 23px; margin-right: 1px; }
.cons-badge { position: absolute; right: -7px; bottom: -5px; width: 13px; height: 13px; border-radius: 50%; background: #c42b1c; }
.cons-badge svg { display: block; }
.ti-window { margin-left: 38px; }
.ti-react1 { margin-left: 25px; }
.ti-react2 { margin-left: 19px; }
.ti-plus { margin-left: 25px; }
.h-dots { display: flex; gap: 4px; margin-left: 19px; }
.h-dots i { width: 4px; height: 4px; border-radius: 50%; background: #333; }
.ti-help { margin-left: 25px; }
.ti-close { margin-left: 26px; }

.dt-main { height: 960px; flex: none; display: flex; overflow: hidden; }
.dom-panel { width: 915px; flex: none; display: flex; flex-direction: column; border-right: 1px solid #e3e8f0; }
.dom-tree { flex: 1; padding-top: 5px; color: #333; }
.dom-row { height: 24px; line-height: 24px; padding-left: 30px; white-space: pre; position: relative; }
.dom-sel { background: #f1f1f1; border-top: 1px solid #e2e2e2; border-bottom: 1px solid #e2e2e2; line-height: 22px; }
.dom-in { padding-left: 48px; }
.sel-dots { position: absolute; left: 3px; top: 8px; width: 14px; height: 5px; background: radial-gradient(circle, #333 1.3px, transparent 1.6px) 0 0 / 4.5px 5px repeat-x; }
.c-gray { color: #5a5a5a; }
.c-tag { color: #881280; }
.c-blue { color: #3a5a9a; }
.c-attr { color: #994500; }
.c-val { color: #7a1fa2; }
em { font-style: italic; }
.tri-r { position: absolute; left: 38px; top: 5px; width: 0; height: 0; border-top: 6.5px solid transparent; border-bottom: 6.5px solid transparent; border-left: 9px solid #333; }
.ell { display: inline-block; height: 16px; width: 19px; margin: 0 4px; border-radius: 8px; border: 1px solid #bbb; vertical-align: middle; background: radial-gradient(circle, #222 1.1px, transparent 1.4px) 3px 5px / 4px 5px repeat-x, #e6e6e6; background-clip: padding-box; }
.crumbs { height: 35px; flex: none; border-top: 2px solid #dfe6f0; }
.crumb { display: block; width: 57px; height: 33px; background: #d3e3fd; color: #881280; line-height: 33px; padding-left: 11px; }

.styles { flex: 1; min-width: 0; position: relative; overflow: hidden; }
.st-tabs { height: 48px; background: #f7f7f7; display: flex; align-items: center; padding-left: 5px; font-size: 18px; color: #777; position: relative; }
.st-tab { height: 42px; line-height: 42px; padding: 0 15px; white-space: nowrap; border-radius: 4px 4px 0 0; margin-top: 2px; }
.st-tab + .st-tab { padding: 0 15px 0 0; margin-left: 0; }
.st-on { background: #fff; color: #1a5fb4; width: 66px; margin-right: 15px; padding: 0 15px; }
.st-tab:nth-child(3) { padding-right: 30px; margin-left: 31px; }
.st-tab:nth-child(2) { padding-right: 0; margin-left: 0; }
.st-tab:nth-child(4) { padding-right: 30px; }
.st-tab:nth-child(5) { font-family: "Noto Sans", "Noto Sans CJK SC", sans-serif; }
.st-more { position: absolute; right: 24px; top: 20px; }
.st-filter { height: 48px; background: #f0f0f0; border-bottom: 1px solid #dfe6f0; width: 546px; display: flex; align-items: center; padding-left: 5px; }
.filter-in { width: 260px; height: 38px; background: #fff; border: 1px solid #bbb; border-radius: 5px; font-size: 18px; line-height: 36px; color: #999; padding-left: 6px; }
.hov, .cls { font-weight: 700; font-size: 17px; color: #333; }
.hov { margin-left: 20px; }
.cls { margin-left: 19px; }
.f-plus { margin-left: 24px; margin-top: 2px; }
.f-brush { margin-left: 26px; }
.f-side { margin-left: 29px; }
.st-rules { width: 546px; padding-left: 4px; color: #1f4060; }
.rule { border-bottom: 1px solid #dfe6f0; padding: 3px 0 4px; margin-left: -4px; padding-left: 5px; }
.r-a { padding: 5px 0 5px 5px; }
.r-m { padding-top: 4px; }
.ln { height: 22px; line-height: 22px; padding-left: 2px; white-space: pre; display: flex; align-items: center; justify-content: flex-start; }
.ln b { font-weight: 400; color: #222; }
.ln-sel { justify-content: space-between; padding-right: 6px; margin-bottom: 3px; }
.ln-c { margin-top: 4px; color: #555; }
.ln-e { margin-top: 1px; }
.p { padding-left: 30px; }
.c-colon { color: #222; }
.c-root { color: #8a2a3c; }
.c-lgray { color: #999; }
.src { color: #1a3e8a; text-decoration: underline; }
.sw { width: 16px; height: 16px; margin: 0 4px 0 15px; border: 2px solid #ccc; flex: none; }
.s-blue { background: #0d6efd; } .s-indigo { background: #6610f2; } .s-purple { background: #6f42c1; } .s-pink { background: #d63384; }
.s-red { background: #dc3545; } .s-orange { background: #fd7e14; } .s-yellow { background: #ffc107; } .s-green { background: #198754; }
.s-teal { background: #20c997; } .s-cyan { background: #0dcaf0; } .s-black { background: #000; } .s-white { background: #fff; }
.s-g100 { background: #f8f9fa; } .s-g200 { background: #e9ecef; } .s-g300 { background: #dee2e6; } .s-g400 { background: #ced4da; }
.s-g500 { background: #adb5bd; } .s-g600 { background: #6c757d; } .s-g700 { background: #495057; } .s-g800 { background: #343a40; } .s-g900 { background: #212529; }

.vbar { position: absolute; right: 0; width: 18px; }
.vbar i { position: absolute; display: block; }
.vbar-st { top: 48px; bottom: 0; background: #fdfdfd; }
.vbar-st .up { left: 2px; top: 12px; width: 0; height: 0; border-left: 6.5px solid transparent; border-right: 6.5px solid transparent; border-bottom: 10px solid #777; }
.vbar-st .thumb { left: 2px; top: 34px; width: 13px; height: 228px; border-radius: 7px; background: #8f8f8f; }

.drawer-tabs { height: 49px; flex: none; background: #f7f7f7; border-top: 2px solid #dfe6f0; box-shadow: 0 1px 3px rgba(0,0,0,.18); display: flex; align-items: center; font-size: 18px; color: #777; position: relative; z-index: 2; padding-left: 25px; }
.dr-tab { height: 42px; line-height: 40px; }
.dr-on { background: #fff; color: #1a5fb4; width: 66px; text-align: center; border-radius: 4px 4px 0 0; margin-left: 16px; }
.dr-plus { margin-left: 14px; }
.dr-ic1 { margin-left: auto; }
.dr-ic2 { margin-left: 27px; margin-right: 17px; }
.issues-bar { height: 47px; flex: none; border-bottom: 2px solid #dfe6f0; display: flex; align-items: center; font-size: 18px; color: #333; padding: 2px 0 0 12px; white-space: nowrap; }
.issues-bar .caret { margin: 0 0 0 8px; }
.chk-on { width: 18px; height: 18px; border-radius: 3px; background: #757575; display: flex; align-items: center; justify-content: center; flex: none; }
.chk-off { width: 18px; height: 18px; border-radius: 3px; border: 1.5px solid #666; margin-left: auto; flex: none; }
.ib1 { margin-left: 9px; }
.ib2 { margin-left: 18px; }
.ib3 { margin-left: 21px; }
.ib4 { margin-left: 16px; }
.ib5 { margin-left: 9px; }
.ib6 { margin-left: 18px; margin-right: 11px; }
.issues { flex: 1; min-height: 0; display: flex; position: relative; }
.issue-list { width: 1458px; flex: none; }
.group { height: 44px; border-bottom: 2px solid #dfe6f0; display: flex; align-items: center; font-size: 21px; color: #333; padding: 5px 0 0 18px; }
.tri-d { width: 0; height: 0; border-left: 6.5px solid transparent; border-right: 6.5px solid transparent; border-top: 9px solid #333; margin-right: 8px; margin-top: 3px; }
.issue { height: 46px; border-bottom: 2px solid #dfe6f0; display: flex; align-items: center; padding: 0 12px 0 45px; font-family: "Noto Sans", sans-serif; }
.tri-r2 { width: 0; height: 0; border-top: 6.5px solid transparent; border-bottom: 6.5px solid transparent; border-left: 10px solid #333; flex: none; }
.count { height: 21px; min-width: 27px; padding: 0 9px; margin: -8px 0 0 18px; border: 1px solid #ccc; border-radius: 11px; background: #f6f6f6; font-size: 13px; line-height: 19px; color: #555; text-align: center; flex: none; }
.msg { margin-left: 10px; margin-top: 4px; font-family: "Noto Sans", sans-serif; font-size: 19.7px; color: #333; white-space: nowrap; }
.sev { margin-left: auto; height: 33px; border-radius: 17px; display: flex; align-items: center; gap: 6px; padding: 0 11px 0 14px; font-size: 17px; color: #222; flex: none; }
.sev-e { background: #e85423; }
.sev-w { background: #f1c811; }
.vbar-is { top: 0; bottom: 0; width: 22px; background: #fbfbfb; }
.vbar-is .up { left: 5px; top: 12px; width: 0; height: 0; border-left: 7px solid transparent; border-right: 7px solid transparent; border-bottom: 10px solid #777; }
.vbar-is .thumb { left: 5px; top: 35px; width: 13px; height: 45px; border-radius: 7px; background: #8f8f8f; }
.vbar-is .down { left: 5px; top: 293px; width: 0; height: 0; border-left: 7px solid transparent; border-right: 7px solid transparent; border-top: 10px solid #777; }
.float-ball { position: absolute; left: 1460px; top: 962px; width: 76px; height: 76px; border-radius: 50%; background: #eef2fe; border: 5px solid #d5e0fb; z-index: 4; }
```
